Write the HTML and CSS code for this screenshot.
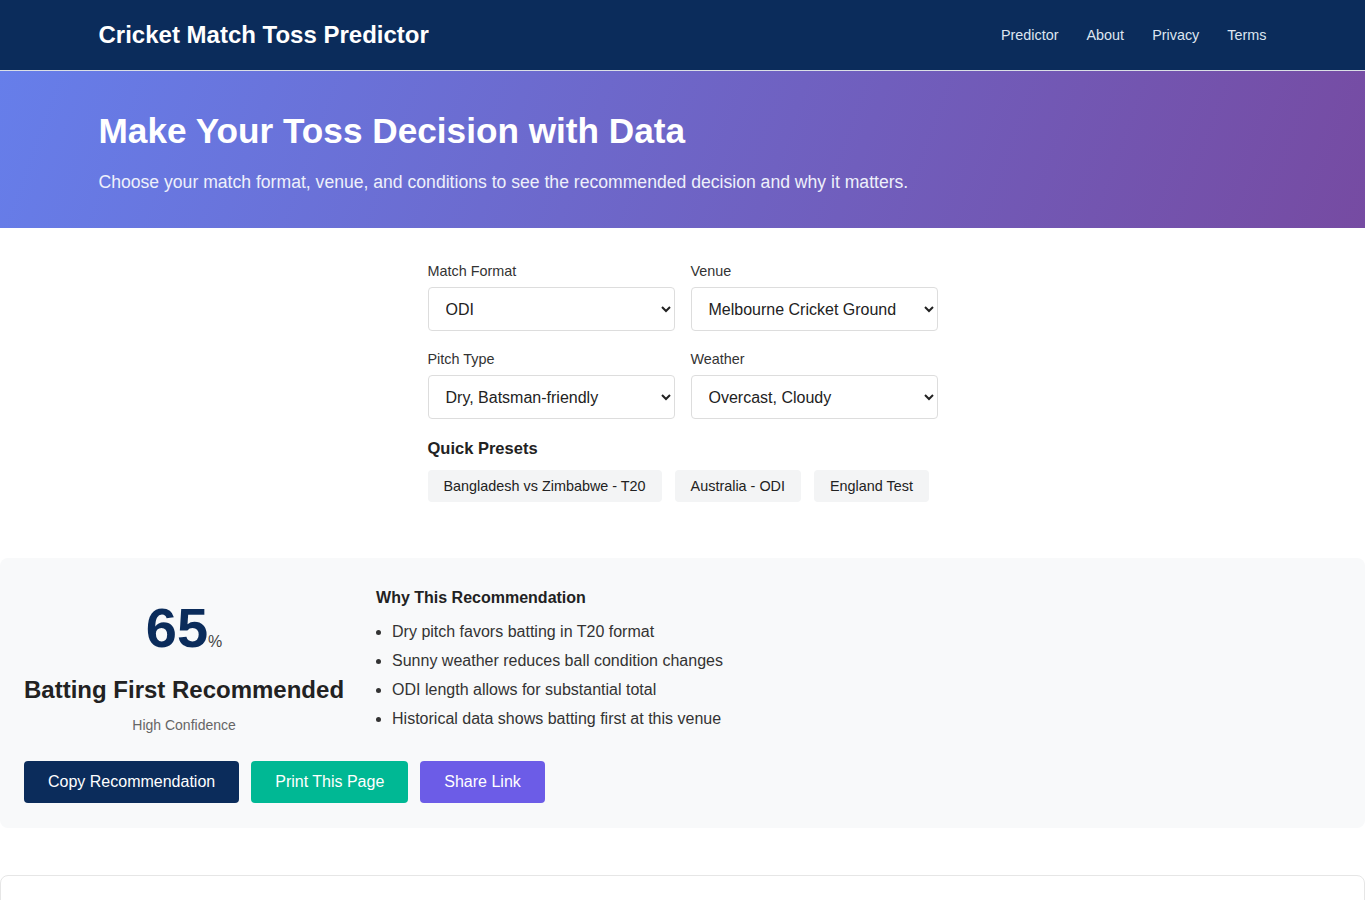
FILE: index.html
```html
<!DOCTYPE html>
<html lang="en">
<head>
  <meta charset="UTF-8" />
  <meta name="viewport" content="width=device-width, initial-scale=1.0" />
  <title>Cricket Match Toss Predictor</title>
  <link rel="stylesheet" href="styles.css">
</head>
<body>

  <!-- Top bar -->
  <header class="site-header">
    <div class="container header-inner">
      <a href="#" class="brand">Cricket Match Toss Predictor</a>
      <nav class="main-nav">
        <a href="#">Predictor</a>
        <a href="#">About</a>
        <a href="#">Privacy</a>
        <a href="#">Terms</a>
      </nav>
    </div>
  </header>

  <!-- Hero -->
  <section class="hero">
    <div class="container">
      <h1>Make Your Toss Decision with Data</h1>
      <p>Choose your match format, venue, and conditions to see the recommended decision and why it matters.</p>
    </div>
  </section>

  <!-- Selector form -->
  <section class="predictor">
    <form class="predictor-form">
      <div class="form-grid">
        <div class="field">
          <label for="format">Match Format</label>
          <select id="format">
            <option>T20</option>
            <option selected>ODI</option>
            <option>Test</option>
          </select>
        </div>
        <div class="field">
          <label for="venue">Venue</label>
          <select id="venue">
            <option selected>Melbourne Cricket Ground</option>
            <option>Lord's</option>
            <option>Eden Gardens</option>
          </select>
        </div>
        <div class="field">
          <label for="pitch">Pitch Type</label>
          <select id="pitch">
            <option selected>Dry, Batsman-friendly</option>
            <option>Green, Seamer-friendly</option>
            <option>Dusty, Spin-friendly</option>
          </select>
        </div>
        <div class="field">
          <label for="weather">Weather</label>
          <select id="weather">
            <option>Sunny, Clear</option>
            <option selected>Overcast, Cloudy</option>
            <option>Humid</option>
          </select>
        </div>
      </div>

      <h3 class="presets-title">Quick Presets</h3>
      <div class="presets">
        <button type="button" class="preset">Bangladesh vs Zimbabwe - T20</button>
        <button type="button" class="preset">Australia - ODI</button>
        <button type="button" class="preset">England Test</button>
      </div>
    </form>
  </section>

  <!-- Result -->
  <section class="result-card">
    <div class="result-row">
      <div class="result-main">
        <div class="score">65<span class="pct">%</span></div>
        <h2 class="decision">Batting First Recommended</h2>
        <p class="confidence">High Confidence</p>
      </div>
      <div class="result-why">
        <h4>Why This Recommendation</h4>
        <ul>
          <li>Dry pitch favors batting in T20 format</li>
          <li>Sunny weather reduces ball condition changes</li>
          <li>ODI length allows for substantial total</li>
          <li>Historical data shows batting first at this venue</li>
        </ul>
      </div>
    </div>
    <div class="actions">
      <button class="btn btn-navy">Copy Recommendation</button>
      <button class="btn btn-teal">Print This Page</button>
      <button class="btn btn-purple">Share Link</button>
    </div>
  </section>

  <section class="info-card"></section>

</body>
</html>
```

FILE: styles.css
```css
* {
  box-sizing: border-box;
}

body {
  margin: 0;
  font-family: "Liberation Sans", Arial, sans-serif;
  color: #222;
  background: #fff;
}

.container {
  max-width: 1200px;
  margin: 0 auto;
  padding: 0 16px;
}

/* header */
.site-header {
  background-color: #0b2c5b;
  border-bottom: 1px solid rgba(255,255,255,0.85);
}

.header-inner {
  height: 70px;
  display: flex;
  align-items: center;
  justify-content: space-between;
}

.brand {
  color: #fff;
  text-decoration: none;
  font-size: 24px;
  font-weight: bold;
}

.main-nav {
  display: flex;
  gap: 28px;
}

.main-nav a {
  color: #dde5f0;
  text-decoration: none;
  font-size: 14.4px;
}

/* hero */
.hero {
  background: linear-gradient(110deg, #667eea 0%, #764ba2 100%);
  color: #fff;
  padding: 39px 0 33px;
}

.hero h1 {
  margin: 0 0 17px;
  font-size: 35.2px;
  line-height: 42px;
}

.hero p {
  margin: 0;
  font-size: 17.6px;
  line-height: 26px;
  color: #eef0fb;
}

/* form */
.predictor {
  padding: 35px 0 56px;
}

.predictor-form {
  width: 510px;
  margin: 0 auto;
}

.form-grid {
  display: grid;
  grid-template-columns: 1fr 1fr;
  column-gap: 16px;
  row-gap: 20px;
}

.field label {
  display: block;
  font-size: 14.4px;
  line-height: 16px;
  color: #333;
  margin-bottom: 8px;
}

.field select {
  width: 100%;
  height: 44px;
  padding: 0 13px;
  font-family: inherit;
  font-size: 16px;
  color: #222;
  background: #fff;
  border: 1px solid #ddd;
  border-radius: 4px;
}

.presets-title {
  margin: 19px 0 12px;
  font-size: 16.5px;
  line-height: 20px;
  color: #222;
}

.presets {
  display: flex;
  gap: 13px;
}

.preset {
  height: 32px;
  padding: 0 16px;
  font-family: inherit;
  font-size: 14.4px;
  color: #222;
  background: #f3f4f5;
  border: none;
  border-radius: 4px;
  cursor: pointer;
}

/* result */
.result-card {
  background: #f8f9fa;
  border-radius: 8px;
  padding: 30px 24px 25px;
}

.result-row {
  display: flex;
  gap: 32px;
}

.result-main {
  flex: 0 0 auto;
  text-align: center;
  white-space: nowrap;
  padding-top: 10px;
}

.score {
  font-size: 56px;
  font-weight: bold;
  line-height: 60px;
  color: #0b2c5b;
}

.pct {
  font-size: 16px;
  line-height: 1;
  font-weight: normal;
  color: #444;
}

.decision {
  margin: 17px 0 12px;
  font-size: 24px;
  line-height: 30px;
  color: #222;
}

.confidence {
  margin: 0;
  font-size: 14px;
  line-height: 16px;
  color: #666;
}

.result-why h4 {
  margin: 0 0 9px;
  font-size: 16px;
  line-height: 20px;
  color: #222;
}

.result-why ul {
  margin: 0;
  padding-left: 16px;
}

.result-why li {
  font-size: 16px;
  line-height: 29px;
  color: #333;
}

.actions {
  display: flex;
  gap: 12px;
  margin-top: 28px;
}

.btn {
  height: 42px;
  padding: 0 24px;
  font-family: inherit;
  font-size: 16px;
  color: #fff;
  border: none;
  border-radius: 4px;
  cursor: pointer;
}

.btn-navy {
  background: #0b2c5b;
}

.btn-teal {
  background: #00b894;
}

.btn-purple {
  background: #6c5ce7;
}

.info-card {
  margin-top: 47px;
  height: 60px;
  border: 1px solid #e6e6e6;
  border-radius: 8px;
  background: #fff;
}
```
